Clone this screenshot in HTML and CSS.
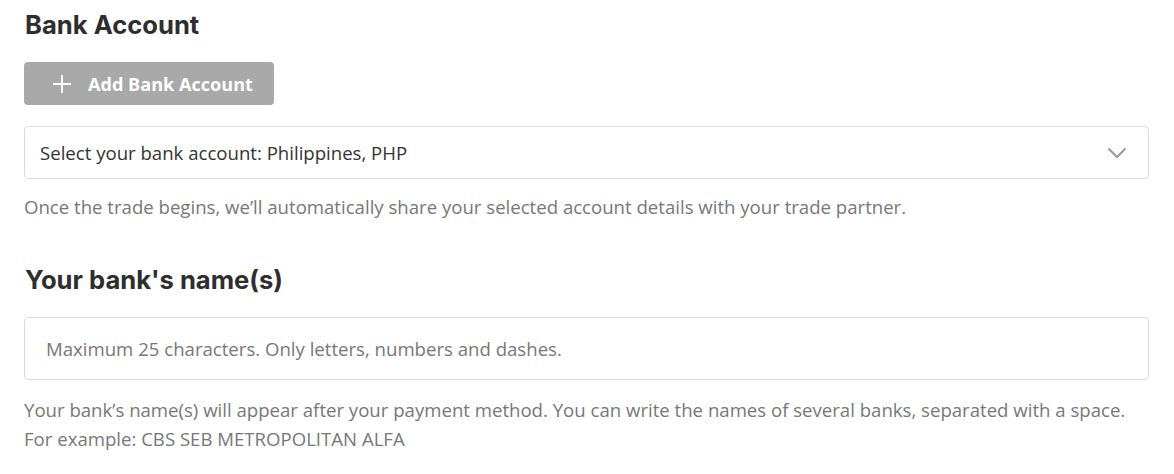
FILE: index.html
```html
<!DOCTYPE html>
<html>
<head>
<meta charset="utf-8">
<link rel="stylesheet" href="styles.css">
</head>
<body>
<main class="page">
  <h2 class="title">Bank Account</h2>
  <button class="add-btn" type="button">
    <svg class="plus" width="20" height="20" viewBox="0 0 20 20"><path d="M10 1v18M1 10h18" stroke="#fff" stroke-width="2" fill="none"/></svg>
    <span>Add Bank Account</span>
  </button>
  <div class="select">
    <span>Select your bank account: Philippines, PHP</span>
    <svg class="chev" width="20" height="12" viewBox="0 0 20 12"><path d="M1.5 1.5l8.5 8.5 8.5-8.5" stroke="#999" stroke-width="2" fill="none"/></svg>
  </div>
  <p class="hint">Once the trade begins, we’ll automatically share your selected account details with your trade partner.</p>
  <h2 class="title second">Your bank's name(s)</h2>
  <div class="input">Maximum 25 characters. Only letters, numbers and dashes.</div>
  <p class="hint two">Your bank’s name(s) will appear after your payment method. You can write the names of several banks, separated with a space.<br>For example: CBS SEB METROPOLITAN ALFA</p>
</main>
</body>
</html>
```
FILE: styles.css
```css
html, body { margin: 0; padding: 0; background: #fff; }
body { font-family: "Open Sans", "Liberation Sans", sans-serif; color: #333; }
.page { padding: 9px 25px 0 24px; display: flex; flex-direction: column; align-items: flex-start; }
.title { margin: 0; font-family: "Inter", "Liberation Sans", sans-serif; font-weight: 700; font-size: 25.6px; line-height: 32px; color: #2e2e2e; padding-left: 1px; }
.add-btn { margin-top: 21px; width: 250px; height: 43px; border: none; border-radius: 4px; background: #a9a9a9; color: #fff; display: flex; align-items: center; gap: 16px; padding: 0 0 0 28px; font-family: "Open Sans", sans-serif; font-weight: 700; font-size: 18.1px; }
.plus { flex: none; }
.select { margin-top: 21px; align-self: stretch; height: 51px; border: 1px solid #dcdcdc; border-radius: 4px; display: flex; align-items: center; justify-content: space-between; padding: 0 21px 0 15px; font-size: 18.6px; color: #333; }
.chev { flex: none; }
.hint { margin: 13px 0 0; font-size: 18.6px; line-height: 29px; color: #777; }
.second { margin-top: 43px; }
.input { margin-top: 21px; align-self: stretch; height: 61px; border: 1px solid #dcdcdc; border-radius: 4px; display: flex; align-items: center; padding: 0 21px; font-size: 18.6px; color: #777; }
.hint.two { margin-top: 15px; }
```
